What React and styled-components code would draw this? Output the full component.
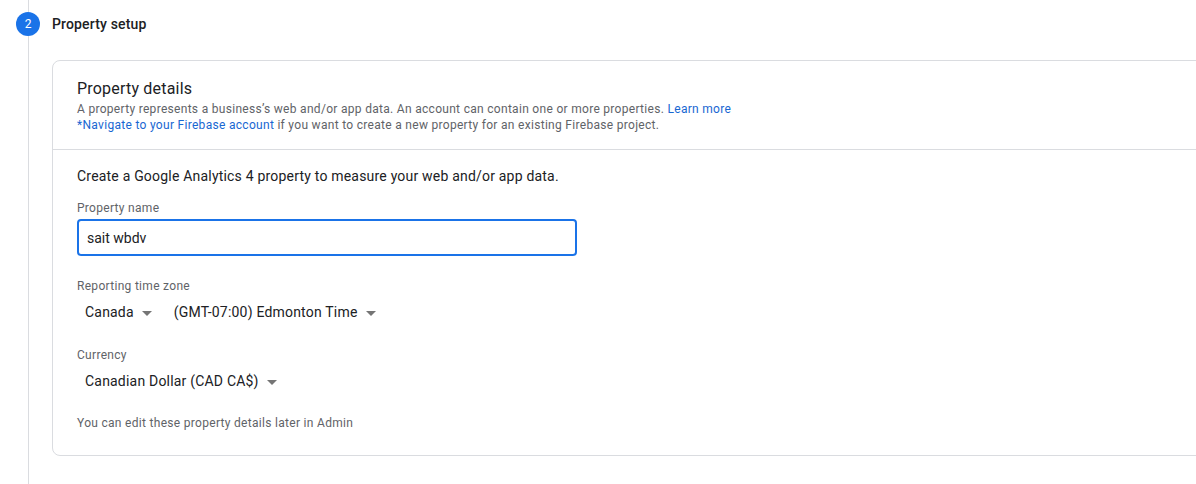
import React from 'react';
import styled, { createGlobalStyle } from 'styled-components';

const GlobalStyle = createGlobalStyle`
  html, body {
    margin: 0;
    padding: 0;
    background: #ffffff;
    font-family: Roboto, "Liberation Sans", Arial, sans-serif;
    color: #202124;
    overflow: hidden;
  }
`;

const Page = styled.div`
  width: 1196px;
  height: 484px;
  overflow: hidden;
`;

const Step = styled.div`
  display: flex;
  align-items: stretch;
  min-height: 484px;
`;

const Rail = styled.div`
  width: 24px;
  padding-left: 16px;
  margin-right: 12px;
  display: flex;
  flex-direction: column;
  align-items: center;
  flex-shrink: 0;
`;

const RailLine = styled.div`
  width: 1px;
  background: #dadce0;
  height: ${props => (props.grow ? 'auto' : `${props.size}px`)};
  flex: ${props => (props.grow ? '1' : 'none')};
`;

const StepBadge = styled.div`
  width: 24px;
  height: 24px;
  border-radius: 50%;
  background: #1a73e8;
  color: #ffffff;
  font-size: 12px;
  display: flex;
  align-items: center;
  justify-content: center;
`;

const StepBody = styled.div`
  flex: 1;
  padding-top: 12px;
  min-width: 0;
`;

const StepTitle = styled.div`
  height: 24px;
  line-height: 24px;
  font-size: 14px;
  font-weight: 500;
  letter-spacing: 0.15px;
  color: #202124;
`;

const Card = styled.div`
  margin-top: 24px;
  margin-right: -24px;
  border: 1px solid #dadce0;
  border-radius: 8px;
`;

const CardHeader = styled.div`
  padding: 16px 24px 16px;
  border-bottom: 1px solid #dadce0;
`;

const CardTitle = styled.div`
  font-size: 16px;
  line-height: 24px;
  letter-spacing: 0.2px;
  color: #202124;
`;

const Hint = styled.div`
  font-size: 12px;
  line-height: 16px;
  letter-spacing: 0.3px;
  color: #5f6368;
  margin-top: ${props => props.top || 0}px;
`;

const Link = styled.a`
  color: #1967d2;
  text-decoration: none;
`;

const CardBody = styled.div`
  padding: 16px 24px 24px;
`;

const Lead = styled.div`
  font-size: 14px;
  line-height: 20px;
  letter-spacing: 0.2px;
  color: #202124;
`;

const FieldLabel = styled.div`
  font-size: 12px;
  line-height: 16px;
  letter-spacing: 0.3px;
  color: #5f6368;
  margin-top: ${props => props.top}px;
`;

const TextInput = styled.div`
  box-sizing: border-box;
  width: 500px;
  height: 37px;
  margin-top: 3px;
  border: 2px solid #1a73e8;
  border-radius: 4px;
  padding: 0 8px;
  display: flex;
  align-items: center;
  font-size: 14px;
  color: #202124;
`;

const SelectRow = styled.div`
  display: flex;
  gap: 6px;
  height: 36px;
`;

const Select = styled.div`
  display: flex;
  align-items: center;
  padding: 0 8px;
  font-size: 14px;
  letter-spacing: 0.2px;
  color: #202124;
  cursor: pointer;
`;

const Caret = styled.span`
  width: 0;
  height: 0;
  margin-left: 8px;
  margin-top: 2px;
  border-left: 5px solid transparent;
  border-right: 5px solid transparent;
  border-top: 5px solid #757575;
`;

const Dropdown = ({ children }) => (
  <Select>
    {children}
    <Caret />
  </Select>
);

const App = () => (
  <Page>
    <GlobalStyle />
    <Step>
      <Rail>
        <RailLine size={12} />
        <StepBadge>2</StepBadge>
        <RailLine grow />
      </Rail>
      <StepBody>
        <StepTitle>Property setup</StepTitle>
        <Card>
          <CardHeader>
            <CardTitle>Property details</CardTitle>
            <Hint>
              A property represents a business’s web and/or app data. An account can contain one or more properties.{' '}
              <Link href="#">Learn more</Link>
            </Hint>
            <Hint>
              <Link href="#">*Navigate to your Firebase account</Link> if you want to create a new property for an existing Firebase project.
            </Hint>
          </CardHeader>
          <CardBody>
            <Lead>Create a Google Analytics 4 property to measure your web and/or app data.</Lead>
            <FieldLabel top={14}>Property name</FieldLabel>
            <TextInput>sait wbdv</TextInput>
            <FieldLabel top={22}>Reporting time zone</FieldLabel>
            <SelectRow>
              <Dropdown>Canada</Dropdown>
              <Dropdown>(GMT-07:00) Edmonton Time</Dropdown>
            </SelectRow>
            <FieldLabel top={17}>Currency</FieldLabel>
            <SelectRow>
              <Dropdown>Canadian Dollar (CAD CA$)</Dropdown>
            </SelectRow>
            <Hint top={16}>You can edit these property details later in Admin</Hint>
          </CardBody>
        </Card>
      </StepBody>
    </Step>
  </Page>
);

export default App;
